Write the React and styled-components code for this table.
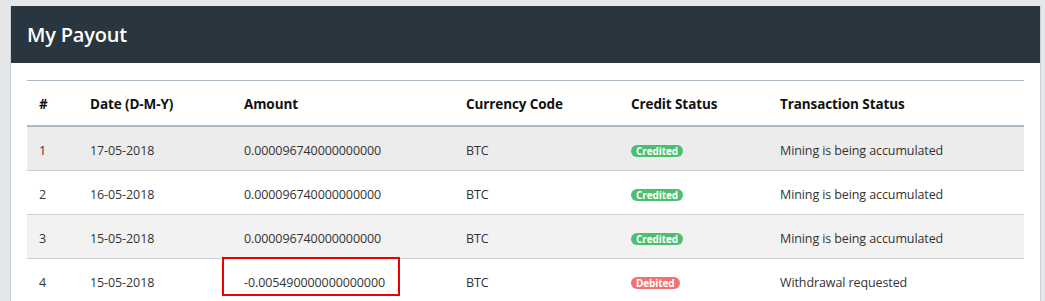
import React from 'react'
import styled, { createGlobalStyle } from 'styled-components'

const GlobalStyle = createGlobalStyle`
  body {
    margin: 0;
    background: #e4e6e8;
    font-family: "Open Sans", "Noto Sans", sans-serif;
  }
`

const rows = [
  { id: 1, date: '17-05-2018', amount: '0.000096740000000000', code: 'BTC', credited: true, status: 'Mining is being accumulated' },
  { id: 2, date: '16-05-2018', amount: '0.000096740000000000', code: 'BTC', credited: true, status: 'Mining is being accumulated' },
  { id: 3, date: '15-05-2018', amount: '0.000096740000000000', code: 'BTC', credited: true, status: 'Mining is being accumulated' },
  { id: 4, date: '15-05-2018', amount: '-0.005490000000000000', code: 'BTC', credited: false, status: 'Withdrawal requested', marked: true },
]

const App = () => {
  return (
    <>
      <GlobalStyle />
      <Card>
        <CardHeader>
          <Title>My Payout</Title>
        </CardHeader>
        <CardBody>
          <Table>
            <colgroup>
              <col style={{ width: 51 }} />
              <col style={{ width: 154 }} />
              <col style={{ width: 222 }} />
              <col style={{ width: 165 }} />
              <col style={{ width: 149 }} />
              <col />
            </colgroup>
            <thead>
              <tr>
                <Th>#</Th>
                <Th>Date (D-M-Y)</Th>
                <Th>Amount</Th>
                <Th>Currency Code</Th>
                <Th>Credit Status</Th>
                <Th>Transaction Status</Th>
              </tr>
            </thead>
            <tbody>
              {rows.map((r, i) => (
                <Row key={r.id} shade={i === 0 ? '#ececec' : i % 2 === 0 ? '#f2f2f2' : '#ffffff'}>
                  <Td>{r.id}</Td>
                  <Td>{r.date}</Td>
                  <Td>
                    {r.amount}
                    {r.marked && <Marker />}
                  </Td>
                  <Td>{r.code}</Td>
                  <Td>
                    <Badge credited={r.credited ? 1 : 0}>{r.credited ? 'Credited' : 'Debited'}</Badge>
                  </Td>
                  <Td>{r.status}</Td>
                </Row>
              ))}
            </tbody>
          </Table>
        </CardBody>
      </Card>
    </>
  )
}

export default App

const Card = styled.div`
  margin: 6px 4px 0 10px;
  background: #fff;
  border-left: 1px solid #c9d1d7;
  border-right: 1px solid #c9d1d7;
  height: 295px;
  overflow: hidden;
`

const CardHeader = styled.div`
  background: #2a363f;
  height: 57px;
  display: flex;
  align-items: center;
  padding: 0 16px;
`

const Title = styled.h1`
  margin: 0;
  color: #fff;
  font-size: 20px;
  font-weight: 600;
  letter-spacing: -0.2px;
`

const CardBody = styled.div`
  padding: 17px 16px 0 16px;
`

const Table = styled.table`
  width: 100%;
  border-collapse: collapse;
  table-layout: fixed;
  border-top: 1px solid #a9b8c3;
  font-size: 12.5px;
  color: #333;
`

const Th = styled.th`
  text-align: left;
  font-weight: 700;
  font-size: 13.5px;
  color: #111;
  height: 42px;
  padding: 2px 12px 0 12px;
  border-bottom: 2px solid #a9b8c3;
  letter-spacing: -0.1px;
`

const Row = styled.tr`
  background: ${p => p.shade};
  border-bottom: 1px solid #c8d0d6;
`

const Td = styled.td`
  position: relative;
  height: 40px;
  padding: 3px 12px 0 12px;
  white-space: nowrap;
  letter-spacing: -0.1px;
`

const Badge = styled.span`
  display: inline-block;
  background: #${p => (p.credited ? '4dbd70' : 'f07272')};
  color: #fff;
  font-size: 10px;
  font-weight: 700;
  line-height: 12px;
  padding: 0 5px;
  border-radius: 6px;
  vertical-align: middle;
`

const Marker = styled.span`
  position: absolute;
  left: -10px;
  top: -2px;
  width: 174px;
  height: 35px;
  border: 2px solid #ee0000;
`
